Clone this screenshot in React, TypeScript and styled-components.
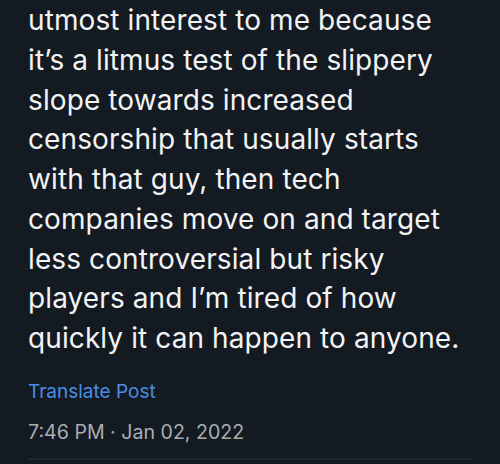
import React from 'react';
import styled, { createGlobalStyle } from 'styled-components';

const lines = [
  'utmost interest to me because',
  'it’s a litmus test of the slippery',
  'slope towards increased',
  'censorship that usually starts',
  'with that guy, then tech',
  'companies move on and target',
  'less controversial but risky',
  'players and I’m tired of how',
  'quickly it can happen to anyone.',
];

const GlobalStyle = createGlobalStyle`
  html, body {
    margin: 0;
    padding: 0;
    background: #141a22;
  }
  body {
    font-family: Inter, "Noto Sans", sans-serif;
    -webkit-font-smoothing: antialiased;
  }
`;

const Page = styled.div`
  width: 500px;
  height: 464px;
  overflow: hidden;
  background: #141a22;
  padding: 0 28px 0 28px;
  box-sizing: border-box;
  display: flex;
  flex-direction: column;
`;

const Body = styled.div`
  margin-top: 1px;
  color: #f2f3f4;
  font-size: 28px;
  line-height: 39.75px;
  letter-spacing: 0.1px;
`;

const Line = styled.div`
  white-space: nowrap;
`;

const Translate = styled.div`
  margin-top: 21px;
  color: #4a8de6;
  font-size: 19px;
  line-height: 24px;
`;

const Meta = styled.div`
  margin-top: 15px;
  color: #a9adb2;
  font-size: 19.6px;
  line-height: 26px;
`;

const Divider = styled.div`
  margin-top: 13px;
  height: 2px;
  background: #20262e;
`;

export default function App() {
  return (
    <Page>
      <GlobalStyle />
      <Body>
        {lines.map((l) => (
          <Line key={l}>{l}</Line>
        ))}
      </Body>
      <Translate>Translate Post</Translate>
      <Meta>7:46 PM · Jan 02, 2022</Meta>
      <Divider />
    </Page>
  );
}
